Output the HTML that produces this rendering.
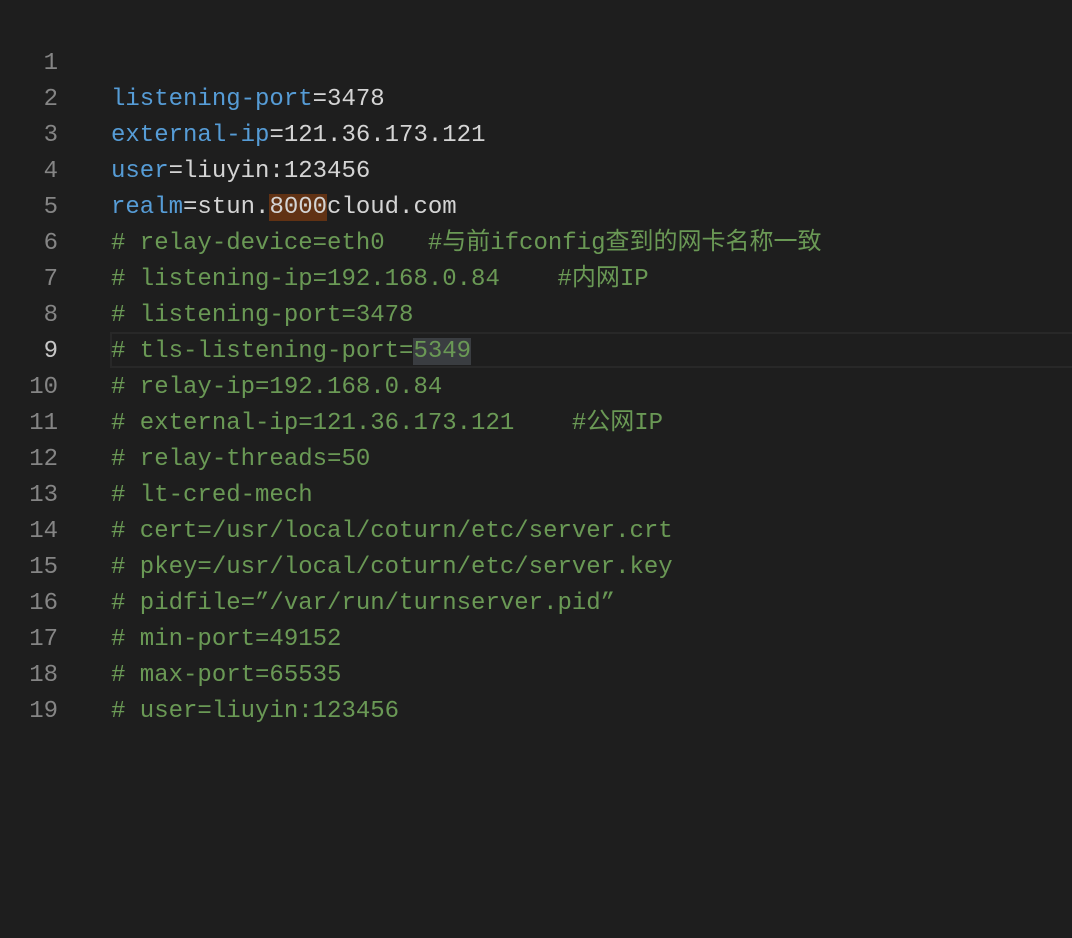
<!DOCTYPE html>
<html><head><meta charset="utf-8"><style>
html,body{margin:0;padding:0;background:#1e1e1e;width:1072px;height:938px;overflow:hidden}
.ed{position:absolute;top:46px;left:0;right:0;font-family:"Liberation Mono","Noto Sans CJK SC",monospace;font-size:24px;line-height:36px}
.l{position:relative;height:36px}
.n{position:absolute;left:0;width:58px;text-align:right;color:#858585}
.c{position:absolute;left:111px;color:#d4d4d4;white-space:pre}
.k{color:#569cd6}.g{color:#6a9955}
.cur{position:absolute;left:110px;right:0;top:-2px;height:32px;border:2px solid #282828;border-right:none}
.hl{background:#613214}.sel{background:#3a3d41}
</style></head><body><div class="ed"><div class="l"><span class="n">1</span><span class="c"></span></div><div class="l"><span class="n">2</span><span class="c"><span class="k">listening-port</span>=3478</span></div><div class="l"><span class="n">3</span><span class="c"><span class="k">external-ip</span>=121.36.173.121</span></div><div class="l"><span class="n">4</span><span class="c"><span class="k">user</span>=liuyin:123456</span></div><div class="l"><span class="n">5</span><span class="c"><span class="k">realm</span>=stun.<span class="hl">8000</span>cloud.com</span></div><div class="l"><span class="n">6</span><span class="c g"># relay-device=eth0   #与前ifconfig查到的网卡名称一致</span></div><div class="l"><span class="n">7</span><span class="c g"># listening-ip=192.168.0.84    #内网IP</span></div><div class="l"><span class="n">8</span><span class="c g"># listening-port=3478</span></div><div class="l"><div class="cur"></div><span class="n" style="color:#c6c6c6">9</span><span class="c g"># tls-listening-port=<span class="sel">5349</span></span></div><div class="l"><span class="n">10</span><span class="c g"># relay-ip=192.168.0.84</span></div><div class="l"><span class="n">11</span><span class="c g"># external-ip=121.36.173.121    #公网IP</span></div><div class="l"><span class="n">12</span><span class="c g"># relay-threads=50</span></div><div class="l"><span class="n">13</span><span class="c g"># lt-cred-mech</span></div><div class="l"><span class="n">14</span><span class="c g"># cert=/usr/local/coturn/etc/server.crt</span></div><div class="l"><span class="n">15</span><span class="c g"># pkey=/usr/local/coturn/etc/server.key</span></div><div class="l"><span class="n">16</span><span class="c g"># pidfile=”/var/run/turnserver.pid”</span></div><div class="l"><span class="n">17</span><span class="c g"># min-port=49152</span></div><div class="l"><span class="n">18</span><span class="c g"># max-port=65535</span></div><div class="l"><span class="n">19</span><span class="c g"># user=liuyin:123456</span></div></div></body></html>
